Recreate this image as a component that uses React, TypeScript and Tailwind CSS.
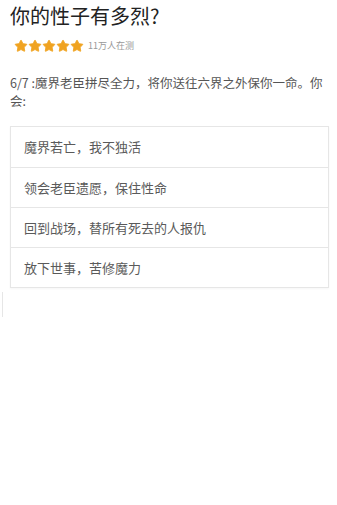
import { Star } from "lucide-react";

const options = [
  "魔界若亡，我不独活",
  "领会老臣遗愿，保住性命",
  "回到战场，替所有死去的人报仇",
  "放下世事，苦修魔力",
];

export default function App() {
  return (
    <div
      className="relative min-h-[505px] w-[337px] bg-white"
      style={{ fontFamily: '"Noto Sans CJK SC", "Noto Sans", sans-serif' }}
    >
      <div className="px-[10px] pt-[2px]">
        <h1 className="text-[20px] leading-[28px] text-[#222]">你的性子有多烈?</h1>

        <div className="mt-[9px] flex items-center gap-[4px] pl-[4px]">
          <div className="flex">
            {[0, 1, 2, 3, 4].map((i) => (
              <Star key={i} size={14} fill="#f0a321" stroke="#f0a321" strokeWidth={1.5} />
            ))}
          </div>
          <span className="text-[9px] leading-[12px] text-[#999]">11万人在测</span>
        </div>

        <p className="mt-[21px] text-[12.5px] leading-[18px] text-[#555]">
          6/7 :魔界老臣拼尽全力，将你送往六界之外保你一命。你会:
        </p>

        <div className="mt-[16px] mr-[-2px] border border-[#e6e6e6] shadow-[0_1px_2px_rgba(0,0,0,0.04)]">
          {options.map((o, i) => (
            <div
              key={i}
              className={`flex h-[40px] items-center pl-[13px] text-[13px] text-[#5a5a5a] ${
                i > 0 ? "border-t border-[#e6e6e6]" : ""
              }`}
            >
              {o}
            </div>
          ))}
        </div>
      </div>

      <div className="absolute left-0 top-[292px] h-[25px] w-[3px] border-r border-[#e6e6e6]" />
    </div>
  );
}
